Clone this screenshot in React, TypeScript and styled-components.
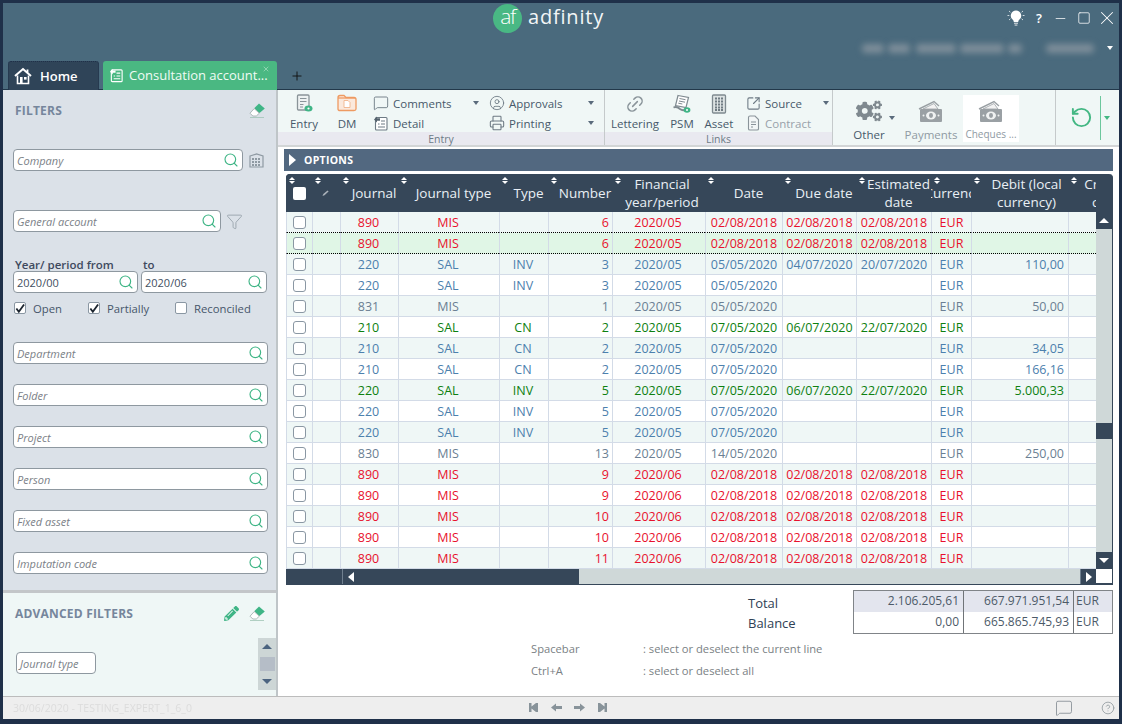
import React from 'react';
import styled, { createGlobalStyle } from 'styled-components';
import { Search, Funnel, Link2, RotateCcw, Printer, MessageSquare, CircleUser, Plus, Minus, Square, X, SquareArrowOutUpRight, CircleHelp } from 'lucide-react';
import { FaPencilAlt, FaCogs } from 'react-icons/fa';

const Global = createGlobalStyle`
  html, body { margin: 0; padding: 0; width: 1122px; height: 724px; overflow: hidden; background: #1f3049; }
  * { box-sizing: border-box; }
  body { font-family: "Open Sans", "Liberation Sans", sans-serif; }
`;

const Frame = styled.div`
  width: 1122px; height: 724px; background: #1f3049; padding: 3px 3px 5px 3px;
  display: flex; flex-direction: column; overflow: hidden;
`;
const Header = styled.header`
  background: #4a6a7d; height: 87px; flex: none; display: flex; flex-direction: column;
  border-bottom: 1px solid #22384a;
`;
const TopRow = styled.div`
  height: 30px; display: flex; align-items: center; padding-left: 490px; flex: none;
`;
const Logo = styled.div`
  width: 29px; height: 29px; border-radius: 50%; background: #49b884; color: #fff; flex: none;
  display: flex; align-items: center; justify-content: center;
  font-size: 21px; font-weight: 300; line-height: 1; letter-spacing: -1.5px; padding-bottom: 3px;
`;
const Brand = styled.div`
  color: #f2f6f7; font-size: 20px; font-weight: 400; letter-spacing: 0.8px; margin-left: 6px; line-height: 1; padding-bottom: 3px;
`;
const Controls = styled.div`
  margin-left: auto; display: flex; align-items: center; color: #fff; height: 26px;
`;
const Ctl = styled.div<{ $w: number }>`
  width: ${p => p.$w}px; display: flex; justify-content: center; align-items: center; font-size: 13px; font-weight: 600;
`;
const AccountRow = styled.div`
  height: 28px; display: flex; align-items: center; justify-content: flex-end; padding-right: 6px; flex: none; padding-top: 2px;
`;
const Blur = styled.span<{ $w: number; $ml?: number }>`
  width: ${p => p.$w}px; height: 9px; background: #7e8e9a; filter: blur(3px); margin-left: ${p => p.$ml ?? 0}px; border-radius: 4px;
`;
const Caret = styled.span<{ $c?: string; $ml?: number }>`
  width: 0; height: 0; flex: none; display: inline-block;
  border-left: 3.5px solid transparent; border-right: 3.5px solid transparent;
  border-top: 4px solid ${p => p.$c ?? '#5a6b7c'}; margin-left: ${p => p.$ml ?? 0}px;
`;
const TabRow = styled.div`
  height: 29px; display: flex; align-items: flex-end; padding-left: 5px; flex: none;
`;
const HomeTab = styled.div`
  width: 91px; height: 29px; background: #2f4458; border: 1px dotted #1f3049; border-bottom: none; border-radius: 3px 3px 0 0;
  display: flex; align-items: center; gap: 8px; padding: 0 0 1px 5px; color: #fff; font-size: 13px; font-weight: 600;
`;
const ActiveTab = styled.div`
  position: relative; width: 174px; height: 29px; background: #4ab882; margin-left: 4px; border-radius: 3px 3px 0 0;
  display: flex; align-items: center; gap: 5px; padding: 0 0 2px 6px; color: #f0fbf5; font-size: 13px; white-space: nowrap;
`;
const TabClose = styled.span`
  position: absolute; right: 7px; top: 4px; display: flex; color: #cfeedd;
`;
const AddTab = styled.div`
  width: 40px; height: 29px; display: flex; align-items: center; justify-content: center; color: #111;
`;

const Body = styled.div`
  flex: 1; display: flex; min-height: 0;
`;
const Sidebar = styled.aside`
  width: 275px; flex: none; display: flex; flex-direction: column; border-right: 2px solid #bfc5c8; background: #dbe1e8;
`;
const Filters = styled.div`
  height: 503px; flex: none; padding: 0 9px 0 10px; border-bottom: 3px solid #c3c6c9;
`;
const SideHead = styled.div`
  display: flex; align-items: center; justify-content: space-between; height: 40px; padding: 0 1px 0 2px; flex: none;
`;
const SideTitle = styled.div`
  color: #76869c; font-size: 12px; font-weight: 700; letter-spacing: 0.2px;
`;
const IconRow = styled.div`
  display: flex; align-items: center; gap: 10px;
`;
const FieldLine = styled.div<{ $mt: number; $gap?: number }>`
  display: flex; align-items: center; margin-top: ${p => p.$mt}px; gap: ${p => p.$gap ?? 5}px;
`;
const Field = styled.div<{ $w: number }>`
  width: ${p => p.$w}px; height: 22px; flex: none; background: #fff; border: 1px solid #8e98a0; border-radius: 4px;
  display: flex; align-items: center; justify-content: space-between; padding: 0 3px 0 3px;
  font-size: 11px; color: #3f4f5f; overflow: hidden; white-space: nowrap;
`;
const Placeholder = styled.span`
  font-style: italic; color: #7b8187;
`;
const Mag = styled(Search).attrs({ size: 16, strokeWidth: 1.7, color: '#3fb586' })`
  flex: none;
`;
const LabelLine = styled.div`
  display: flex; margin-top: 26px; height: 13px; align-items: center; font-size: 11.5px; font-weight: 600; color: #3e4a5e; padding-left: 2px;
`;
const FromLabel = styled.span`
  width: 128px;
`;
const Checks = styled.div`
  display: flex; align-items: center; margin-top: 7px; height: 16px; font-size: 11.3px; color: #46566a; padding-left: 1px;
`;
const CheckItem = styled.div<{ $w: number }>`
  width: ${p => p.$w}px; display: flex; align-items: center; gap: 7px;
`;
const Box = styled.span`
  width: 12px; height: 12px; background: #fff; border: 1px solid #8a97a3; border-radius: 2px; flex: none; display: flex; align-items: center; justify-content: center;
`;
const HeadBox = styled.span`
  display: block; width: 13px; height: 13px; margin-left: 7px; background: #fff; border-radius: 2px;
`;
const Advanced = styled.div`
  flex: 1; background: #eff7f6; position: relative; padding: 0 9px 0 10px;
`;
const AdvField = styled.div`
  width: 80px; height: 22px; margin-top: 19px; margin-left: 3px; background: #fff; border: 1px solid #8e98a0; border-radius: 4px;
  display: flex; align-items: center; padding-left: 3px; font-size: 11px; overflow: hidden;
`;
const MiniScroll = styled.div`
  position: absolute; right: 0; top: 45px; width: 18px; height: 52px; background: #cdd6d6;
  display: flex; flex-direction: column; align-items: center; justify-content: space-between; padding: 6px 0;
`;
const MiniThumb = styled.div`
  width: 15px; height: 14px; background: #b5bdc7;
`;
const TriUp = styled.span<{ $c: string; $s?: number }>`
  width: 0; height: 0; flex: none; border-left: ${p => p.$s ?? 5}px solid transparent; border-right: ${p => p.$s ?? 5}px solid transparent;
  border-bottom: ${p => p.$s ?? 5}px solid ${p => p.$c};
`;
const TriDown = styled.span<{ $c: string; $s?: number }>`
  width: 0; height: 0; flex: none; border-left: ${p => p.$s ?? 5}px solid transparent; border-right: ${p => p.$s ?? 5}px solid transparent;
  border-top: ${p => p.$s ?? 5}px solid ${p => p.$c};
`;
const TriLeft = styled.span`
  width: 0; height: 0; border-top: 5px solid transparent; border-bottom: 5px solid transparent; border-right: 6px solid #fff;
`;
const TriRight = styled.span<{ $s?: number }>`
  width: 0; height: 0; flex: none; border-top: ${p => p.$s ?? 5}px solid transparent; border-bottom: ${p => p.$s ?? 5}px solid transparent; border-left: ${p => (p.$s ?? 5) + 1}px solid #fff;
`;

const Main = styled.main`
  flex: 1; min-width: 0; background: #fff; display: flex; flex-direction: column;
`;
const Toolbar = styled.div`
  height: 57px; flex: none; background: #f0f7f6; display: flex; border-bottom: 2px solid #d2d5d6;
`;
const Group = styled.div<{ $w: number }>`
  width: ${p => p.$w}px; flex: none; display: flex; flex-direction: column; border-right: 1px solid #c5cacb;
`;
const GroupBody = styled.div<{ $pl: number }>`
  flex: 1; display: flex; padding-left: ${p => p.$pl}px; min-height: 0;
`;
const Caption = styled.div`
  height: 13px; flex: none; background: #e9e9f0; color: #6d7b87; font-size: 10.5px; line-height: 15px; text-align: center;
`;
const BigTool = styled.div<{ $w: number }>`
  width: ${p => p.$w}px; height: 41px; flex: none; display: flex; flex-direction: column; align-items: center; justify-content: space-between; padding-top: 4px;
  font-size: 11.5px; color: #47596a; line-height: 14px; white-space: nowrap;
`;
const SmallCol = styled.div<{ $w: number; $ml?: number }>`
  width: ${p => p.$w}px; flex: none; margin-left: ${p => p.$ml ?? 0}px; display: flex; flex-direction: column; padding-top: 3px;
`;
const SmallTool = styled.div<{ $off?: boolean }>`
  height: 20px; flex: none; display: flex; align-items: center; font-size: 11.5px; color: ${p => p.$off ? '#98a2aa' : '#47596a'};
  white-space: nowrap;
`;
const SmallIcon = styled.span`
  width: 16px; margin-right: 4px; display: flex; justify-content: center; flex: none;
`;
const SmallCaret = styled.span`
  margin-left: auto; margin-right: 3px; display: flex;
`;
const LargeTool = styled.div<{ $w: number; $off?: boolean; $on?: boolean; $small?: boolean }>`
  width: ${p => p.$w}px; flex: none; position: relative; height: 47px; margin-top: 5px;
  display: flex; flex-direction: column; align-items: center; justify-content: flex-end;
  background: ${p => p.$on ? '#fff' : 'transparent'};
  font-size: ${p => p.$small ? 10 : 11.5}px; color: ${p => p.$off ? '#8f9aa3' : '#47596a'}; white-space: nowrap; line-height: 15px; gap: 3px;
`;
const OtherCaret = styled.span`
  position: absolute; right: 4px; top: 21px; display: flex;
`;
const RefreshPane = styled.div`
  flex: 1; display: flex; align-items: center; padding-left: 14px;
`;
const GreenRule = styled.span`
  width: 1px; height: 44px; background: #6cc79d; margin-left: 7px;
`;
const OptionsBar = styled.div`
  height: 22px; flex: none; margin: 2px 6px 0 6px; background: #526880; display: flex; align-items: center; padding-left: 5px; gap: 8px;
  color: #fff; font-size: 10.5px; font-weight: 700; letter-spacing: 0.3px;
`;
const Wrap = styled.div`
  margin: 3px 6px 0 8px; height: 411px; flex: none; display: flex; flex-direction: column; background: #364759; border-radius: 4px 4px 0 0; overflow: hidden;
  border-right: 1px solid #364759;
`;
const TableRow = styled.div`
  display: flex; flex: none; height: 395px;
`;
const TableClip = styled.div`
  width: 810px; flex: none; overflow: hidden;
`;
const Grid = styled.table`
  table-layout: fixed; width: 810px; border-collapse: separate; border-spacing: 0;
`;
const Th = styled.th`
  height: 38px; padding: 0; background: #364759; color: #e9eff5; font-size: 13.5px; font-weight: 500; line-height: 18px;
  position: relative; overflow: hidden; text-align: left;
`;
const ThInner = styled.div<{ $w?: number; $pad: number }>`
  width: ${p => p.$w ? p.$w + 'px' : '100%'}; display: flex; justify-content: center; text-align: center; padding-left: ${p => p.$pad}px; white-space: nowrap;
`;
const ThText = styled.span`
  flex: none; display: block;
`;
const Sort = styled.span`
  position: absolute; left: 2px; top: 1px; width: 7px; height: 11px; display: flex; flex-direction: column; justify-content: center; gap: 1px; align-items: center;
`;
const EditMark = styled.span`
  display: block; margin-left: 9px; line-height: 0;
`;
const Td = styled.td<{ $c: string; $bg: string; $r?: boolean; $pr: number; $dot?: boolean }>`
  height: 21px; padding: 1px ${p => p.$pr}px 0 0; font-size: 12.5px; line-height: 14px; color: ${p => p.$c}; background: ${p => p.$bg};
  text-align: ${p => p.$r ? 'right' : 'center'}; white-space: nowrap; overflow: hidden;
  border-left: 1px solid #d3dbe7;
  border-bottom: 1px ${p => p.$dot ? 'dotted #000' : 'solid #d3dbe7'};
`;
const VScroll = styled.div`
  width: 16px; flex: none; background: #cfd8d8; display: flex; flex-direction: column; margin-top: 38px; position: relative;
`;
const ScrollBtn = styled.div`
  height: 17px; width: 16px; background: #364759; display: flex; align-items: center; justify-content: center; flex: none;
`;
const VThumb = styled.div`
  position: absolute; top: 211px; left: 0; width: 16px; height: 16px; background: #364759;
`;
const VSpacer = styled.div`
  flex: 1;
`;
const HScroll = styled.div`
  height: 15px; flex: none; display: flex; background: #cfd8d8;
`;
const HLead = styled.div`
  width: 56px; background: #364759; flex: none;
`;
const HBtn = styled.div`
  width: 16px; flex: none; background: #364759; display: flex; align-items: center; justify-content: center; border-left: 1px solid #6f7f8e;
`;
const HThumb = styled.div`
  width: 221px; background: #364759; flex: none;
`;
const HTrack = styled.div`
  flex: 1; background: #cfd8d8;
`;
const HCorner = styled.div`
  width: 16px; background: #fff; flex: none; border-bottom: 1px solid #364759;
`;
const Totals = styled.div`
  display: flex; justify-content: flex-end; margin: 5px 6px 0 0; flex: none;
`;
const TotalLabels = styled.div`
  width: 105px; flex: none; padding-top: 3px; font-size: 13px; font-weight: 500; color: #2f4155; line-height: 20px;
`;
const TotalGrid = styled.div`
  width: 260px; flex: none; display: grid; grid-template-columns: 110px 110px 38px; border: 1px solid #808488;
`;
const TotalCell = styled.div<{ $shade?: boolean; $left?: boolean; $last?: boolean }>`
  height: 21px; background: ${p => p.$shade ? '#e3e5ee' : '#fff'}; font-size: 12px; color: #4c5a68;
  display: flex; align-items: center; justify-content: ${p => p.$left ? 'flex-start' : 'flex-end'}; padding: 0 4px 2px 2px;
  border-right: ${p => p.$last ? 'none' : '1px solid #707478'};
`;
const Shortcuts = styled.div`
  margin: 3px 0 0 253px; display: grid; grid-template-columns: 112px auto; row-gap: 8px; font-size: 11.2px; line-height: 14px; color: #7a7f84; justify-content: start; padding-top: 5px;
`;
const StatusBar = styled.footer`
  height: 23px; flex: none; background: #eeeeee; border-top: 1px solid #bcbcbc; display: flex; align-items: center; position: relative; padding: 0 4px 0 10px;
`;
const StatusText = styled.span`
  font-size: 10.5px; color: #dcdcdc; filter: blur(0.6px); white-space: nowrap;
`;
const Nav = styled.div`
  position: absolute; left: 524px; top: 5px; display: flex; gap: 10px; align-items: center;
`;
const StatusEnd = styled.div`
  margin-left: auto; display: flex; align-items: center; gap: 28px; color: #8a9298;
`;
const CellBox = styled.span`
  display: block; width: 13px; height: 13px; margin: 0 0 0 6px; background: #fff; border: 1px solid #8a97a3; border-radius: 3px;
`;

const Bulb = () => (
  <svg width="20" height="18" viewBox="0 0 20 18">
    <path d="M10 1.5a5.2 5.2 0 0 1 3.2 9.3c-.7.6-1 1.3-1 2.2H7.8c0-.9-.3-1.6-1-2.2A5.2 5.2 0 0 1 10 1.5Z" fill="#fff" />
    <rect x="8" y="13.6" width="4" height="1.4" fill="#b9c4cb" />
    <rect x="8.6" y="15.4" width="2.8" height="1.4" fill="#b9c4cb" />
    <path d="M1.5 6.5h1.8M16.7 6.5h1.8M3 2l1.4 1.2M17 2l-1.4 1.2M3 11l1.4-1.2M17 11l-1.4-1.2" stroke="#dfe7ea" strokeWidth="0.9" />
  </svg>
);
const House = () => (
  <svg width="18" height="18" viewBox="0 0 18 18">
    <path d="M1 9 9 2l8 7" fill="none" stroke="#fff" strokeWidth="2" />
    <path d="M3.5 8.5V16.5H14.5V8.5" fill="none" stroke="#fff" strokeWidth="1.6" />
    <rect x="6" y="10" width="2.6" height="6.5" fill="#fff" />
    <rect x="10" y="10" width="2.6" height="2.6" fill="#fff" />
    <rect x="12.6" y="2.5" width="1.8" height="3" fill="#fff" />
  </svg>
);
const Eraser = () => (
  <svg width="17" height="17" viewBox="0 0 17 17">
    <path d="M10 1.5 15.8 6.5 10.5 11 5.2 6.2Z" fill="#3fb586" />
    <path d="M5.2 6.6 10.3 11.2 7.3 14 3.8 14 1 11.2Z" fill="#fff" stroke="#9aaaa8" strokeWidth="0.8" />
    <path d="M1 15.5H15" stroke="#9fc4b5" strokeWidth="0.8" />
  </svg>
);
const BuildingGrid = () => (
  <svg width="17" height="15" viewBox="0 0 17 15">
    <path d="M2 3 8.5 1 15 3V14H2Z" fill="#dbe1e8" stroke="#8e99a2" strokeWidth="1.2" />
    {[4, 7, 10].map(x => [5, 8, 11].map(y => <rect key={x + '-' + y} x={x} y={y} width="2" height="2" fill="#8e99a2" />))}
  </svg>
);
const DocBadge = ({ size = 18 }: { size?: number }) => (
  <svg width={size} height={size + 1} viewBox="0 0 18 19">
    <rect x="2.5" y="1" width="11.5" height="15" rx="1" fill="#eef2f2" stroke="#8a9499" strokeWidth="1.3" />
    <path d="M5 4.5h6.5M5 7.5h6.5M5 10.5h3.5M5 13h3" stroke="#8a9499" strokeWidth="1.1" />
    <ellipse cx="13.5" cy="14.5" rx="4" ry="3" fill="#3fb586" />
    <circle cx="13.5" cy="14.5" r="1.1" fill="#fff" />
  </svg>
);
const FolderDoc = () => (
  <svg width="20" height="18" viewBox="0 0 20 17">
    <path d="M1 3.2Q1 1 3 1h4l2 2h8q2 0 2 2v9.5q0 1.5-2 1.5H3q-2 0-2-1.5Z" fill="#fbe9dc" stroke="#ee9a62" strokeWidth="1.3" />
    <path d="M1 3.5h17" stroke="#ee9a62" strokeWidth="1.3" />
    <path d="M7 6h4l2 2v5H7Z" fill="#fff" stroke="#f0b58d" strokeWidth="0.9" />
  </svg>
);
const DetailIcon = () => (
  <svg width="16" height="16" viewBox="0 0 16 16">
    <rect x="2.5" y="2.5" width="11.5" height="12.5" rx="1" fill="#fff" stroke="#6d7a84" strokeWidth="1.1" />
    <path d="M8 6h4M8 9h4M5 9h1.5M5 12h7" stroke="#6d7a84" strokeWidth="1.2" />
    <path d="M1 4.5 4 1.5V3.3H7V5.7H4V7.5Z" fill="#55636e" />
  </svg>
);
const SheetTabIcon = () => (
  <svg width="15" height="16" viewBox="0 0 16 16">
    <rect x="2.5" y="2.5" width="11.5" height="12.5" rx="1" fill="none" stroke="#fff" strokeWidth="1.2" />
    <path d="M8 6h4M8 9h4M5 9h1.5M5 12h7" stroke="#fff" strokeWidth="1.2" />
    <path d="M1 4.5 4 1.5V3.3H7V5.7H4V7.5Z" fill="#fff" />
  </svg>
);
const ReceiptIcon = () => (
  <svg width="20" height="20" viewBox="0 0 20 20">
    <path d="M6 1.5 16.5 3.5 14 13.5 3.5 11.5Z" fill="#fff" stroke="#7f8a90" strokeWidth="1.2" />
    <path d="M7.5 4.5l6 1.2M7 7l6 1.2M6.3 9.2l4 .8" stroke="#7f8a90" strokeWidth="1" />
    <path d="M1.5 13.5Q5 12 8 15q3 2.5 7 0" fill="none" stroke="#7f8a90" strokeWidth="1.8" />
    <ellipse cx="15" cy="16" rx="3.4" ry="2.7" fill="#3fb586" />
    <circle cx="15" cy="16" r="1" fill="#fff" />
  </svg>
);
const AssetIcon = () => (
  <svg width="16" height="20" viewBox="0 0 16 20">
    <rect x="1.5" y="1" width="13" height="18" rx="1" fill="#dde3e3" stroke="#7f8a90" strokeWidth="1.3" />
    {[4, 7, 10].map(x => [3.5, 6.5, 9.5, 12.5, 15].map(y => <rect key={x + '-' + y} x={x} y={y} width="2" height="2" fill="#6f7b82" />))}
  </svg>
);
const ContractIcon = () => (
  <svg width="13" height="16" viewBox="0 0 13 16">
    <path d="M1.5 2.5Q1.5 1 3 1h5l3.5 3.5V14q0 1-1.5 1H3q-1.5 0-1.5-1Z" fill="#f3f7f7" stroke="#8a949a" strokeWidth="1.1" />
    <path d="M4 7h5M4 9.5h5M4 12h2" stroke="#8a949a" strokeWidth="1.1" />
  </svg>
);
const MoneyIcon = () => (
  <svg width="26" height="24" viewBox="0 0 26 24">
    <path d="M1 9 16 1.5 21 6" fill="none" stroke="#9aa0a4" strokeWidth="1.4" />
    <path d="M5 9 16 3.5 20 9Z" fill="#f3f3f3" stroke="#9aa0a4" strokeWidth="0.8" />
    <rect x="2" y="9" width="22" height="13" rx="1" fill="#9aa0a4" />
    <ellipse cx="13" cy="15.5" rx="5" ry="4" fill="#f0f2f2" />
    <ellipse cx="13" cy="15.5" rx="2" ry="2.4" fill="#9aa0a4" />
    <circle cx="5.5" cy="15.5" r="1" fill="#f0f2f2" /><circle cx="20.5" cy="15.5" r="1" fill="#f0f2f2" />
  </svg>
);
const NavIcon = ({ d }: { d: string }) => (
  <svg width="13" height="11" viewBox="0 0 13 11"><path d={d} fill="#88939a" /></svg>
);
const PencilMini = () => (
  <svg width="9" height="8" viewBox="0 0 9 8"><path d="M1.5 7 2.3 5 6.5 1.5 7.6 2.6 3.5 6.2Z" fill="#aab2ba" /></svg>
);

const cols: { t: string[]; w: number; inner?: number; pad?: number }[] = [
  { t: [], w: 26 }, { t: [], w: 28 }, { t: ['Journal'], w: 58 }, { t: ['Journal type'], w: 101 }, { t: ['Type'], w: 49 },
  { t: ['Number'], w: 64 }, { t: ['Financial', 'year/period'], w: 93, pad: 7 }, { t: ['Date'], w: 77 }, { t: ['Due date'], w: 74 },
  { t: ['Estimated', 'date'], w: 75 }, { t: ['Currency'], w: 40, pad: 4 }, { t: ['Debit (local', 'currency)'], w: 97, pad: 14 },
  { t: ['Credit (local', 'currency)'], w: 28, inner: 97 },
];

const RED = '#e8112d', BLUE = '#4c80ad', GREEN = '#0d8010', GRAY = '#6b7f93';
type Row = { c: string; j: string; jt: string; ty: string; n: string; fy: string; d: string; due: string; est: string; deb: string; sel?: boolean };
const redRow = (n: string, fy: string, sel?: boolean): Row => ({ c: RED, j: '890', jt: 'MIS', ty: '', n, fy, d: '02/08/2018', due: '02/08/2018', est: '02/08/2018', deb: '', sel });
const rows: Row[] = [
  redRow('6', '2020/05'),
  redRow('6', '2020/05', true),
  { c: BLUE, j: '220', jt: 'SAL', ty: 'INV', n: '3', fy: '2020/05', d: '05/05/2020', due: '04/07/2020', est: '20/07/2020', deb: '110,00' },
  { c: BLUE, j: '220', jt: 'SAL', ty: 'INV', n: '3', fy: '2020/05', d: '05/05/2020', due: '', est: '', deb: '' },
  { c: GRAY, j: '831', jt: 'MIS', ty: '', n: '1', fy: '2020/05', d: '05/05/2020', due: '', est: '', deb: '50,00' },
  { c: GREEN, j: '210', jt: 'SAL', ty: 'CN', n: '2', fy: '2020/05', d: '07/05/2020', due: '06/07/2020', est: '22/07/2020', deb: '' },
  { c: BLUE, j: '210', jt: 'SAL', ty: 'CN', n: '2', fy: '2020/05', d: '07/05/2020', due: '', est: '', deb: '34,05' },
  { c: BLUE, j: '210', jt: 'SAL', ty: 'CN', n: '2', fy: '2020/05', d: '07/05/2020', due: '', est: '', deb: '166,16' },
  { c: GREEN, j: '220', jt: 'SAL', ty: 'INV', n: '5', fy: '2020/05', d: '07/05/2020', due: '06/07/2020', est: '22/07/2020', deb: '5.000,33' },
  { c: BLUE, j: '220', jt: 'SAL', ty: 'INV', n: '5', fy: '2020/05', d: '07/05/2020', due: '', est: '', deb: '' },
  { c: BLUE, j: '220', jt: 'SAL', ty: 'INV', n: '5', fy: '2020/05', d: '07/05/2020', due: '', est: '', deb: '' },
  { c: GRAY, j: '830', jt: 'MIS', ty: '', n: '13', fy: '2020/05', d: '14/05/2020', due: '', est: '', deb: '250,00' },
  redRow('9', '2020/06'), redRow('9', '2020/06'), redRow('10', '2020/06'), redRow('10', '2020/06'), redRow('11', '2020/06'),
];

const Check = () => (
  <svg width="11" height="11" viewBox="0 0 11 11"><path d="M1.5 5.5 4.2 9 10 1" fill="none" stroke="#1c2530" strokeWidth="2" /></svg>
);
const SearchField = ({ w, label, value }: { w: number; label?: string; value?: string }) => (
  <Field $w={w}>{label ? <Placeholder>{label}</Placeholder> : <span>{value}</span>}<Mag /></Field>
);

export default function App() {
  return (
    <Frame>
      <Global />
      <Header>
        <TopRow>
          <Logo>af</Logo>
          <Brand>adfinity</Brand>
          <Controls>
            <Ctl $w={30}><Bulb /></Ctl>
            <Ctl $w={16}>?</Ctl>
            <Ctl $w={26}><Minus size={15} strokeWidth={1.2} /></Ctl>
            <Ctl $w={22}><Square size={14} strokeWidth={1.3} /></Ctl>
            <Ctl $w={24}><X size={22} strokeWidth={1.1} /></Ctl>
          </Controls>
        </TopRow>
        <AccountRow>
          <Blur $w={22} />
          <Blur $w={22} $ml={4} />
          <Blur $w={40} $ml={6} />
          <Blur $w={44} $ml={4} />
          <Blur $w={14} $ml={4} />
          <Blur $w={48} $ml={24} />
          <Caret $c="#fff" $ml={13} />
        </AccountRow>
        <TabRow>
          <HomeTab><House />Home</HomeTab>
          <ActiveTab><SheetTabIcon />Consultation account...<TabClose><X size={8} strokeWidth={1.5} /></TabClose></ActiveTab>
          <AddTab><Plus size={14} strokeWidth={1.6} /></AddTab>
        </TabRow>
      </Header>
      <Body>
        <Sidebar>
          <Filters>
            <SideHead><SideTitle>FILTERS</SideTitle><Eraser /></SideHead>
            <FieldLine $mt={19}><SearchField w={230} label="Company" /><BuildingGrid /></FieldLine>
            <FieldLine $mt={39}><SearchField w={208} label="General account" /><Funnel size={17} strokeWidth={1.1} color="#8e99a2" /></FieldLine>
            <LabelLine><FromLabel>Year/ period from</FromLabel><span>to</span></LabelLine>
            <FieldLine $mt={0} $gap={3}>
              <SearchField w={125} value="2020/00" />
              <SearchField w={126} value="2020/06" />
            </FieldLine>
            <Checks>
              <CheckItem $w={74}><Box><Check /></Box>Open</CheckItem>
              <CheckItem $w={87}><Box><Check /></Box>Partially</CheckItem>
              <CheckItem $w={90}><Box />Reconciled</CheckItem>
            </Checks>
            <FieldLine $mt={26}><SearchField w={255} label="Department" /></FieldLine>
            <FieldLine $mt={20}><SearchField w={255} label="Folder" /></FieldLine>
            <FieldLine $mt={20}><SearchField w={255} label="Project" /></FieldLine>
            <FieldLine $mt={20}><SearchField w={255} label="Person" /></FieldLine>
            <FieldLine $mt={20}><SearchField w={255} label="Fixed asset" /></FieldLine>
            <FieldLine $mt={20}><SearchField w={255} label="Imputation code" /></FieldLine>
          </Filters>
          <Advanced>
            <SideHead>
              <SideTitle>ADVANCED FILTERS</SideTitle>
              <IconRow><FaPencilAlt size={15} color="#3fb586" /><Eraser /></IconRow>
            </SideHead>
            <AdvField><Placeholder>Journal type</Placeholder></AdvField>
            <MiniScroll><TriUp $c="#4c6480" /><MiniThumb /><TriDown $c="#4c6480" /></MiniScroll>
          </Advanced>
        </Sidebar>
        <Main>
          <Toolbar>
            <Group $w={327}>
              <GroupBody $pl={6}>
                <BigTool $w={40}><DocBadge />Entry</BigTool>
                <BigTool $w={46}><FolderDoc />DM</BigTool>
                <SmallCol $w={109} $ml={3}>
                  <SmallTool><SmallIcon><MessageSquare size={16} strokeWidth={1.2} color="#5b6873" /></SmallIcon>Comments<SmallCaret><Caret /></SmallCaret></SmallTool>
                  <SmallTool><SmallIcon><DetailIcon /></SmallIcon>Detail</SmallTool>
                </SmallCol>
                <SmallCol $w={108} $ml={7}>
                  <SmallTool><SmallIcon><CircleUser size={16} strokeWidth={1.3} color="#6d7a84" /></SmallIcon>Approvals<SmallCaret><Caret /></SmallCaret></SmallTool>
                  <SmallTool><SmallIcon><Printer size={16} strokeWidth={1.6} color="#6d7a84" /></SmallIcon>Printing<SmallCaret><Caret /></SmallCaret></SmallTool>
                </SmallCol>
              </GroupBody>
              <Caption>Entry</Caption>
            </Group>
            <Group $w={228}>
              <GroupBody $pl={2}>
                <BigTool $w={56}><Link2 size={20} strokeWidth={1.8} color="#8a949a" style={{ transform: 'rotate(-45deg)' }} />Lettering</BigTool>
                <BigTool $w={38}><ReceiptIcon />PSM</BigTool>
                <BigTool $w={36}><AssetIcon />Asset</BigTool>
                <SmallCol $w={87} $ml={8}>
                  <SmallTool><SmallIcon><SquareArrowOutUpRight size={15} strokeWidth={1.7} color="#6d7a84" /></SmallIcon>Source<SmallCaret><Caret /></SmallCaret></SmallTool>
                  <SmallTool $off><SmallIcon><ContractIcon /></SmallIcon>Contract</SmallTool>
                </SmallCol>
              </GroupBody>
              <Caption>Links</Caption>
            </Group>
            <Group $w={223}>
              <GroupBody $pl={6}>
                <LargeTool $w={60}><FaCogs size={26} color="#7f898f" />Other<OtherCaret><Caret /></OtherCaret></LargeTool>
                <LargeTool $w={64} $off><MoneyIcon />Payments</LargeTool>
                <LargeTool $w={56} $on $off $small><MoneyIcon />Cheques ...</LargeTool>
              </GroupBody>
            </Group>
            <RefreshPane>
              <RotateCcw size={23} strokeWidth={2} color="#43b783" />
              <GreenRule />
              <Caret $c="#43b783" $ml={3} />
            </RefreshPane>
          </Toolbar>
          <OptionsBar><TriRight $s={6} />OPTIONS</OptionsBar>
          <Wrap>
            <TableRow>
              <TableClip>
                <Grid>
                  <colgroup>{cols.map((c, i) => <col key={i} style={{ width: c.w }} />)}</colgroup>
                  <thead>
                    <tr>
                      {cols.map((c, i) => (
                        <Th key={i}>
                          <Sort><TriUp $c="#fff" $s={3} /><TriDown $c="#fff" $s={3} /></Sort>
                          {i === 0 ? <HeadBox /> : null}
                          {i === 1 ? <EditMark><PencilMini /></EditMark> : null}
                          {c.t.length > 0 && (
                            <ThInner $w={c.inner} $pad={c.pad ?? 10}><ThText>{c.t.map((l, k) => <div key={k}>{l}</div>)}</ThText></ThInner>
                          )}
                        </Th>
                      ))}
                    </tr>
                  </thead>
                  <tbody>
                    {rows.map((r, i) => {
                      const bg = r.sel ? '#e0f6e6' : i % 2 === 0 ? '#eff7f6' : '#fff';
                      const dot = !!r.sel || !!rows[i + 1]?.sel;
                      const cell = (v: string, pr = 0, right = false) => <Td $c={r.c} $bg={bg} $r={right} $pr={pr} $dot={dot}>{v}</Td>;
                      return (
                        <tr key={i}>
                          <Td $c={r.c} $bg={bg} $pr={0} $dot={dot}><CellBox /></Td>
                          {cell('')}
                          {cell(r.j, 2)}{cell(r.jt, 2)}{cell(r.ty, 2)}{cell(r.n, 3, true)}{cell(r.fy, 2)}{cell(r.d)}{cell(r.due)}{cell(r.est)}
                          {cell('EUR')}{cell(r.deb, 4, true)}{cell('')}
                        </tr>
                      );
                    })}
                  </tbody>
                </Grid>
              </TableClip>
              <VScroll>
                <ScrollBtn><TriUp $c="#fff" /></ScrollBtn>
                <VThumb />
                <VSpacer />
                <ScrollBtn><TriDown $c="#fff" /></ScrollBtn>
              </VScroll>
            </TableRow>
            <HScroll>
              <HLead />
              <HBtn><TriLeft /></HBtn>
              <HThumb />
              <HTrack />
              <HBtn><TriRight /></HBtn>
              <HCorner />
            </HScroll>
          </Wrap>
          <Totals>
            <TotalLabels><div>Total</div><div>Balance</div></TotalLabels>
            <TotalGrid>
              <TotalCell $shade>2.106.205,61</TotalCell>
              <TotalCell $shade>667.971.951,54</TotalCell>
              <TotalCell $shade $left $last>EUR</TotalCell>
              <TotalCell>0,00</TotalCell>
              <TotalCell>665.865.745,93</TotalCell>
              <TotalCell $left $last>EUR</TotalCell>
            </TotalGrid>
          </Totals>
          <Shortcuts>
            <span>Spacebar</span><span>: select or deselect the current line</span>
            <span>Ctrl+A</span><span>: select or deselect all</span>
          </Shortcuts>
        </Main>
      </Body>
      <StatusBar>
        <StatusText>30/06/2020 - TESTING_EXPERT_1_6_0</StatusText>
        <Nav>
          <NavIcon d="M2 1h2.5v3.5L9 1h2v9H9L4.5 6.5V10H2Z" />
          <NavIcon d="M1 5.5 6 1.5V4h6v3H6v2.5Z" />
          <NavIcon d="M12 5.5 7 1.5V4H1v3h6v2.5Z" />
          <NavIcon d="M11 1H8.5v3.5L4 1H2v9h2l4.5-3.5V10H11Z" />
        </Nav>
        <StatusEnd>
          <MessageSquare size={18} strokeWidth={1.2} />
          <CircleHelp size={14} strokeWidth={1.3} />
        </StatusEnd>
      </StatusBar>
    </Frame>
  );
}
